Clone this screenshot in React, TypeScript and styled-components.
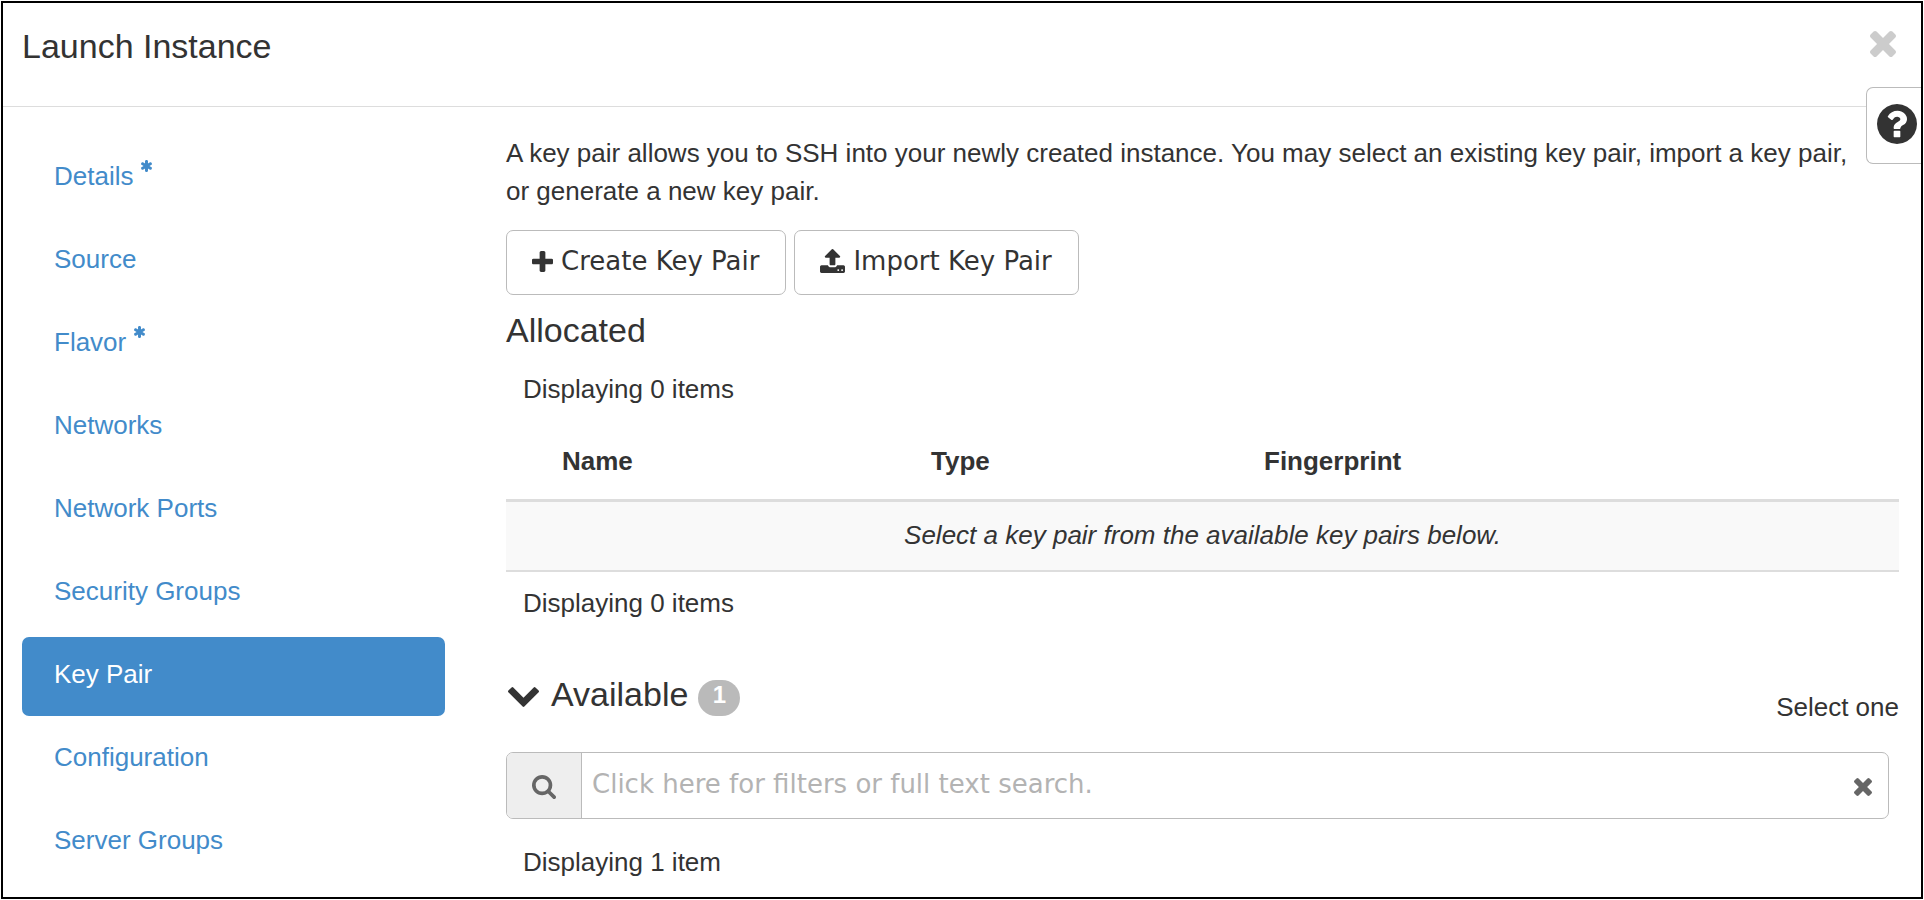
import React, { useState } from 'react';
import styled, { createGlobalStyle, css } from 'styled-components';

const sans = "'Liberation Sans', Arial, sans-serif";
const control = "'DejaVu Sans', Verdana, sans-serif";

const GlobalStyle = createGlobalStyle`
  *, *::before, *::after { box-sizing: border-box; }
  body {
    margin: 0;
    background: #fff;
    color: #333;
    font: 26px/38px ${sans};
  }
  h2, h3, p, ul { margin: 0; padding: 0; font-weight: 400; }
  ul { list-style: none; }
`;

const icons = {
  times: {
    box: '302 366 1188 1188',
    path: 'M1490 1322q0 40-28 68l-136 136q-28 28-68 28t-68-28l-294-294-294 294q-28 28-68 28t-68-28l-136-136q-28-28-28-68t28-68l294-294-294-294q-28-28-28-68t28-68l136-136q28-28 68-28t68 28l294 294 294-294q28-28 68-28t68 28l136 136q28 28 28 68t-28 68l-294 294 294 294q28 28 28 68z',
  },
  plus: {
    box: '192 128 1408 1408',
    path: 'M1600 736v192q0 40-28 68t-68 28h-416v416q0 40-28 68t-68 28h-192q-40 0-68-28t-28-68v-416h-416q-40 0-68-28t-28-68v-192q0-40 28-68t68-28h416v-416q0-40 28-68t68-28h192q40 0 68 28t28 68v416h416q40 0 68 28t28 68z',
  },
  upload: {
    box: '64 64 1664 1600',
    path: 'M1344 1472q0-26-19-45t-45-19-45 19-19 45 19 45 45 19 45-19 19-45zm256 0q0-26-19-45t-45-19-45 19-19 45 19 45 45 19 45-19 19-45zm128-224v320q0 40-28 68t-68 28h-1472q-40 0-68-28t-28-68v-320q0-40 28-68t68-28h427q21 56 70.5 92t110.5 36h256q61 0 110.5-36t70.5-92h427q40 0 68 28t28 68zm-325-648q-17 40-59 40h-256v448q0 26-19 45t-45 19h-256q-26 0-45-19t-19-45v-448h-256q-42 0-59-40-17-39 14-69l448-448q18-19 45-19t45 19l448 448q31 30 14 69z',
  },
  search: {
    box: '64 128 1664 1664',
    path: 'M1216 832q0-185-131.5-316.5t-316.5-131.5-316.5 131.5-131.5 316.5 131.5 316.5 316.5 131.5 316.5-131.5 131.5-316.5zm512 832q0 52-38 90t-90 38q-54 0-90-38l-343-342q-179 124-399 124-143 0-273.5-55.5t-225-150-150-225-55.5-273.5 55.5-273.5 150-225 225-150 273.5-55.5 273.5 55.5 225 150 150 225 55.5 273.5q0 220-124 399l343 343q37 37 37 90z',
  },
  chevron: {
    box: '90 533 1612 1035',
    path: 'M1683 808l-742 741q-19 19-45 19t-45-19l-742-741q-19-19-19-45.5t19-45.5l166-165q19-19 45-19t45 19l531 531 531-531q19-19 45-19t45 19l166 165q19 19 19 45.5t-19 45.5z',
  },
  question: {
    box: '128 128 1536 1536',
    path: 'M1024 1376v-192q0-14-9-23t-23-9h-192q-14 0-23 9t-9 23v192q0 14 9 23t23 9h192q14 0 23-9t9-23zm256-672q0-88-55.5-163t-138.5-116-170-41q-243 0-371 213-15 24 8 42l132 100q7 6 19 6 16 0 25-12 53-68 86-92 34-24 86-24 48 0 85.5 26t37.5 59q0 38-20 61t-68 45q-63 28-115.5 86.5t-52.5 125.5v36q0 14 9 23t23 9h192q14 0 23-9t9-23q0-19 21.5-49.5t54.5-49.5q32-18 49-28.5t46-35 44.5-48 28-60.5 12.5-81zm384 192q0 209-103 385.5t-279.5 279.5-385.5 103-385.5-103-279.5-279.5-103-385.5 103-385.5 279.5-279.5 385.5-103 385.5 103 279.5 279.5 103 385.5z',
  },
  asterisk: {
    box: '181 128 1430 1536',
    path: 'M1546 1050q46 26 59.5 77.5t-12.5 97.5l-64 110q-26 46-77.5 59.5t-97.5-12.5l-266-153v307q0 52-38 90t-90 38h-128q-52 0-90-38t-38-90v-307l-266 153q-46 26-97.5 12.5t-77.5-59.5l-64-110q-26-46-12.5-97.5t59.5-77.5l266-154-266-154q-46-26-59.5-77.5t12.5-97.5l64-110q26-46 77.5-59.5t97.5 12.5l266 153v-307q0-52 38-90t90-38h128q52 0 90 38t38 90v307l266-153q46-26 97.5-12.5t77.5 59.5l64 110q26 46 12.5 97.5t-59.5 77.5l-266 154z',
  },
};

type IconName = keyof typeof icons;

const IconSvg = styled.svg`
  display: block;
  flex: none;
  fill: currentColor;
`;

function Icon({ name, width, height = width }: { name: IconName; width: number; height?: number }) {
  return (
    <IconSvg width={width} height={height} viewBox={icons[name].box} aria-hidden="true">
      <path d={icons[name].path} />
    </IconSvg>
  );
}

const Dialog = styled.div`
  position: relative;
  margin: 1px;
  border: 2px solid #000;
  min-height: calc(100vh - 2px);
`;

const Header = styled.header`
  display: flex;
  justify-content: space-between;
  align-items: flex-start;
  padding: 24px 25px 41px 19px;
  border-bottom: 1px solid #ddd;
`;

const Title = styled.h2`
  font-size: 34px;
  line-height: 38px;
`;

const IconButton = styled.button<{ $tone: string }>`
  display: flex;
  padding: 4px 0;
  border: 0;
  background: none;
  color: ${(p) => p.$tone};
  cursor: pointer;
`;

const HelpButton = styled.button`
  position: absolute;
  top: 84px;
  right: 0;
  display: flex;
  padding: 16px 4px 19px 10px;
  border: 1px solid #bbb;
  border-right: 0;
  border-radius: 7px 0 0 7px;
  background: #fff;
  color: #333;
  cursor: pointer;
`;

const Body = styled.div`
  display: flex;
  gap: 61px;
  padding: 27px 22px 0 19px;
`;

const Steps = styled.nav`
  flex: 0 0 423px;
  padding-top: 5px;
`;

const StepList = styled.ul`
  display: flex;
  flex-direction: column;
  gap: 4px;
`;

const StepLink = styled.a<{ $active: boolean }>`
  display: flex;
  gap: 8px;
  padding: 18px 32px 23px;
  border-radius: 7px;
  color: #428bca;
  text-decoration: none;
  ${(p) =>
    p.$active &&
    css`
      background: #428bca;
      color: #fff;
    `}
`;

const Required = styled.span`
  padding-top: 3px;
`;

const Main = styled.main`
  flex: 1;
  min-width: 0;
`;

const Intro = styled.p`
  padding-right: 28px;
`;

const Actions = styled.div`
  display: flex;
  gap: 8px;
  margin-top: 20px;
`;

const ActionButton = styled.button`
  display: flex;
  align-items: center;
  gap: 8px;
  padding: 11px 26px 14px 25px;
  border: 1px solid #bbb;
  border-radius: 7px;
  background: #fff;
  color: #333;
  font: 26px/38px ${control};
  cursor: pointer;
`;

const Heading = styled.h3`
  font-size: 34px;
  line-height: 38px;
`;

const Allocated = styled.section`
  padding-top: 16px;
`;

const Count = styled.p<{ $above: number }>`
  margin-top: ${(p) => p.$above}px;
  padding-left: 17px;
`;

const Table = styled.table`
  width: 100%;
  margin-top: 19px;
  border-spacing: 0;
  table-layout: fixed;
`;

const Col = styled.col<{ $width?: number }>`
  width: ${(p) => (p.$width ? `${p.$width}px` : 'auto')};
`;

const HeadCell = styled.th`
  padding: 15px 15px 19px;
  border-bottom: 3px solid #ddd;
  text-align: left;
`;

const EmptyCell = styled.td`
  padding: 14px 15px 16px;
  border-bottom: 2px solid #ddd;
  background: #f9f9f9;
  font-style: italic;
  text-align: center;
`;

const Available = styled.section`
  padding-top: 53px;
`;

const AvailableBar = styled.div`
  display: flex;
  justify-content: space-between;
  align-items: flex-start;
`;

const Toggle = styled.button`
  display: flex;
  align-items: center;
  gap: 12px;
  padding: 0 0 0 2px;
  border: 0;
  background: none;
  color: inherit;
  font: inherit;
  cursor: pointer;
  ${IconSvg} { margin-top: 5px; }
`;

const HeadingGroup = styled.div`
  display: flex;
  align-items: flex-start;
  gap: 10px;
`;

const Badge = styled.span`
  min-width: 42px;
  margin-top: 5px;
  padding-bottom: 6px;
  border-radius: 18px;
  background: #bababa;
  color: #fff;
  font: bold 24px/30px ${sans};
  text-align: center;
`;

const Hint = styled.span`
  padding-top: 13px;
`;

const SearchBox = styled.div`
  display: flex;
  margin: 26px 10px 0 0;
  border: 1px solid #bbb;
  border-radius: 7px;
  overflow: hidden;
`;

const SearchLabel = styled.label`
  display: flex;
  align-items: center;
  padding: 2px 25px 0 25px;
  border-right: 1px solid #bbb;
  background: #eee;
  color: #666;
`;

const SearchInput = styled.input`
  flex: 1;
  min-width: 0;
  padding: 12px 10px 15px;
  border: 0;
  outline: 0;
  background: #fff;
  color: #333;
  font: 26px/38px ${control};
  height: 65px;
  &::placeholder { color: #b3b3b3; opacity: 1; }
`;

const ClearSlot = styled.div`
  display: flex;
  align-items: center;
  padding: 2px 16px 0 0;
`;

const steps = [
  { label: 'Details', required: true },
  { label: 'Source' },
  { label: 'Flavor', required: true },
  { label: 'Networks' },
  { label: 'Network Ports' },
  { label: 'Security Groups' },
  { label: 'Key Pair' },
  { label: 'Configuration' },
  { label: 'Server Groups' },
];

export default function App() {
  const [current, setCurrent] = useState('Key Pair');
  const [query, setQuery] = useState('');

  return (
    <>
      <GlobalStyle />
      <Dialog role="dialog" aria-labelledby="dialog-title">
        <Header>
          <Title id="dialog-title">Launch Instance</Title>
          <IconButton $tone="#ccc" type="button" aria-label="Close">
            <Icon name="times" width={26} />
          </IconButton>
        </Header>
        <HelpButton type="button" aria-label="Help">
          <Icon name="question" width={40} />
        </HelpButton>
        <Body>
          <Steps aria-label="Steps">
            <StepList>
              {steps.map((step) => (
                <li key={step.label}>
                  <StepLink
                    href="#"
                    $active={step.label === current}
                    onClick={(e) => {
                      e.preventDefault();
                      setCurrent(step.label);
                    }}
                  >
                    {step.label}
                    {step.required && (
                      <Required>
                        <Icon name="asterisk" width={11} height={12} />
                      </Required>
                    )}
                  </StepLink>
                </li>
              ))}
            </StepList>
          </Steps>
          <Main>
            <Intro>
              A key pair allows you to SSH into your newly created instance. You may select an
              existing key pair, import a key pair, or generate a new key pair.
            </Intro>
            <Actions>
              <ActionButton type="button">
                <Icon name="plus" width={21} />
                Create Key Pair
              </ActionButton>
              <ActionButton type="button">
                <Icon name="upload" width={25} height={24} />
                Import Key Pair
              </ActionButton>
            </Actions>
            <Allocated>
              <Heading>Allocated</Heading>
              <Count $above={21}>Displaying 0 items</Count>
              <Table>
                <colgroup>
                  <Col $width={41} />
                  <Col $width={369} />
                  <Col $width={333} />
                  <Col />
                </colgroup>
                <thead>
                  <tr>
                    <HeadCell />
                    <HeadCell scope="col">Name</HeadCell>
                    <HeadCell scope="col">Type</HeadCell>
                    <HeadCell scope="col">Fingerprint</HeadCell>
                  </tr>
                </thead>
                <tbody>
                  <tr>
                    <EmptyCell colSpan={4}>
                      Select a key pair from the available key pairs below.
                    </EmptyCell>
                  </tr>
                </tbody>
              </Table>
              <Count $above={12}>Displaying 0 items</Count>
            </Allocated>
            <Available>
              <AvailableBar>
                <HeadingGroup>
                  <Toggle type="button" aria-expanded="true">
                    <Icon name="chevron" width={31} height={20} />
                    <Heading as="span">Available</Heading>
                  </Toggle>
                  <Badge>1</Badge>
                </HeadingGroup>
                <Hint>Select one</Hint>
              </AvailableBar>
              <SearchBox>
                <SearchLabel htmlFor="key-search" aria-label="Search">
                  <Icon name="search" width={24} />
                </SearchLabel>
                <SearchInput
                  id="key-search"
                  type="text"
                  placeholder="Click here for filters or full text search."
                  value={query}
                  onChange={(e) => setQuery(e.target.value)}
                />
                <ClearSlot>
                  <IconButton
                    $tone="#666"
                    type="button"
                    aria-label="Clear search"
                    onClick={() => setQuery('')}
                  >
                    <Icon name="times" width={18} />
                  </IconButton>
                </ClearSlot>
              </SearchBox>
              <Count $above={24}>Displaying 1 item</Count>
            </Available>
          </Main>
        </Body>
      </Dialog>
    </>
  );
}
